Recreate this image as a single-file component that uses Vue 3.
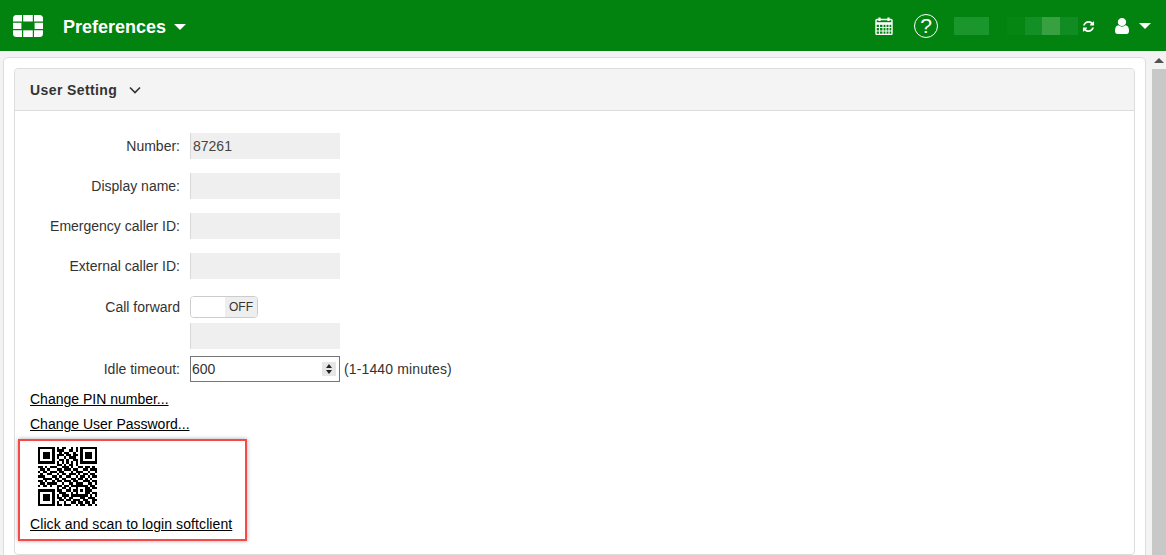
<script setup>
const qrRows = [
  '1111111010110010101111111',
  '1000001011100110101000001',
  '1011101001011001001011101',
  '1011101011101101101011101',
  '1011101010010111001011101',
  '1000001001101001101000001',
  '1111111010101010101111111',
  '0000000011010110100000000',
  '1101011100111010011011010',
  '0110100011011101100110111',
  '1011011101100010111001001',
  '0100110010110111010110110',
  '1110001101001100101101011',
  '0011110110110011011010100',
  '1101001011011101100111011',
  '0110111100100110111001101',
  '1011010011011011111110110',
  '0000000010110100100011011',
  '1111111011001101101011100',
  '1000001001110010100011011',
  '1011101010111011111110101',
  '1011101011010110001101110',
  '1011101001101101110110011',
  '1000001010010011011011010',
  '1111111011011100101101101'
]
const qrPath = qrRows
  .map((row, y) =>
    [...row].map((c, x) => (c === '1' ? `M${x} ${y}h1v1h-1z` : '')).join('')
  )
  .join('')

const fields = [
  { label: 'Number:', value: '87261' },
  { label: 'Display name:', value: '' },
  { label: 'Emergency caller ID:', value: '' },
  { label: 'External caller ID:', value: '' }
]

const refreshPath =
  'M1639 1056q0 5-1 7-64 268-268 434.5t-478 166.5q-146 0-282.5-55t-243.5-157l-129 129q-19 19-45 19t-45-19-19-45v-448q0-26 19-45t45-19h448q26 0 45 19t19 45-19 45l-137 137q71 66 161 102t187 36q134 0 250-65t186-179q11-17 53-117 8-23 30-23h192q13 0 22.5 9.5t9.5 22.5zm25-800v448q0 26-19 45t-45 19h-448q-26 0-45-19t-19-45 19-45l138-138q-148-137-349-137-134 0-250 65t-186 179q-11 17-53 117-8 23-30 23h-199q-13 0-22.5-9.5t-9.5-22.5v-7q65-268 270-434.5t480-166.5q146 0 284 55.5t245 156.5l130-129q19-19 45-19t45 19 19 45z'
const userPath =
  'M1536 1399q0 109-62.5 187t-150.5 78h-854q-88 0-150.5-78t-62.5-187q0-85 8.5-160.5t31.5-152 58.5-131 94-89 134.5-34.5q131 128 313 128t313-128q76 0 134.5 34.5t94 89 58.5 131 31.5 152 8.5 160.5zm-256-887q0 159-112.5 271.5t-271.5 112.5-271.5-112.5-112.5-271.5 112.5-271.5 271.5-112.5 271.5 112.5 112.5 271.5z'
</script>

<template>
  <div class="page">
    <header class="topbar">
      <svg class="logo" width="30" height="22" viewBox="0 0 30 22" fill="#fff">
        <path d="M0 6.5V3.5Q0 0 3.5 0H9V6.5Z" />
        <path d="M10.2 0H19.8V6.5H10.2Z" />
        <path d="M21 0H26.5Q30 0 30 3.5V6.5H21Z" />
        <path d="M0 7.8H8.4V14H0Z" />
        <path d="M21.6 7.8H30V14H21.6Z" />
        <path d="M0 15.3H9V22H3.5Q0 22 0 18.5Z" />
        <path d="M10.2 15.3H19.8V22H10.2Z" />
        <path d="M21 15.3H30V18.5Q30 22 26.5 22H21Z" />
      </svg>
      <span class="title">Preferences</span>
      <span class="caret title-caret"></span>
      <span class="spacer"></span>
      <svg class="cal" width="18" height="18" viewBox="0 0 18 18" fill="none" stroke="#fff">
        <rect x="1" y="2.5" width="16" height="15" rx="1" stroke-width="1.4" />
        <path d="M1 6.5H17" stroke-width="2.6" />
        <path d="M4.5 0.5V4M13.5 0.5V4" stroke-width="2.2" />
        <path d="M1 10.5H17M1 14H17M4.5 7V17M8 7V17M11 7V17M14 7V17" stroke-width="1.1" />
      </svg>
      <span class="help">?</span>
      <span class="blur blur-a"></span>
      <span class="blur-group">
        <span class="blur blur-b1"></span>
        <span class="blur blur-b2"></span>
        <span class="blur blur-b3"></span>
        <span class="blur blur-b4"></span>
      </span>
      <svg class="refresh" width="13" height="13" viewBox="0 0 1792 1792" fill="#fff">
        <path :d="refreshPath" />
      </svg>
      <svg class="user" width="14" height="16" viewBox="256 128 1280 1536" fill="#fff" preserveAspectRatio="none">
        <path :d="userPath" />
      </svg>
      <span class="caret user-caret"></span>
    </header>

    <div class="body">
      <main class="content">
        <section class="outer">
          <div class="panel">
            <div class="panel-head">
              <span class="panel-title">User Setting</span>
              <svg class="chev" width="12" height="8" viewBox="0 0 12 8" fill="none" stroke="#333" stroke-width="1.6">
                <path d="M1 1.5L6 6.5L11 1.5" />
              </svg>
            </div>
            <div class="panel-body">
              <div v-for="f in fields" :key="f.label" class="row">
                <label class="label">{{ f.label }}</label>
                <div class="input disabled">{{ f.value }}</div>
              </div>

              <div class="row forward">
                <label class="label">Call forward</label>
                <div class="toggle"><span class="toggle-on"></span><span class="toggle-off">OFF</span></div>
              </div>
              <div class="row forward-input">
                <span class="label"></span>
                <div class="input disabled"></div>
              </div>

              <div class="row idle">
                <label class="label">Idle timeout:</label>
                <div class="input number">
                  <span>600</span>
                  <span class="spin">
                    <i class="up"></i>
                    <i class="down"></i>
                  </span>
                </div>
                <span class="hint">(1-1440 minutes)</span>
              </div>

              <a class="link first-link">Change PIN number...</a>
              <a class="link second-link">Change User Password...</a>

              <div class="scan">
                <svg class="qr" width="59" height="59" viewBox="0 0 25 25" shape-rendering="crispEdges">
                  <path :d="qrPath" fill="#000" />
                </svg>
                <a class="link scan-link">Click and scan to login softclient</a>
              </div>
            </div>
          </div>
        </section>
      </main>
      <aside class="scrollbar">
        <div class="arrow"><i></i></div>
        <div class="thumb"></div>
      </aside>
    </div>
  </div>
</template>

<style>
html, body { margin: 0; overflow: hidden; }
</style>

<style scoped>
.page {
  width: 1166px;
  height: 555px;
  display: flex;
  flex-direction: column;
  overflow: hidden;
  font-family: "Liberation Sans", Arial, sans-serif;
  font-size: 14px;
  color: #333;
  background: #f3f3f3;
}
.topbar {
  height: 51px;
  flex: none;
  display: flex;
  align-items: center;
  background: #02830f;
  color: #fff;
  padding: 0 15px 0 13px;
  box-sizing: border-box;
}
.logo { flex: none; }
.title {
  margin-left: 20px;
  padding-top: 4px;
  font-size: 18px;
  font-weight: 700;
}
.caret {
  width: 0;
  height: 0;
  border-left: 6px solid transparent;
  border-right: 6px solid transparent;
  border-top: 6px solid #fff;
}
.title-caret { margin-left: 8px; margin-top: 2px; }
.spacer { flex: 1; }
.cal { flex: none; margin: 1px 21px 0 0; }
.help {
  width: 24px;
  height: 24px;
  flex: none;
  box-sizing: border-box;
  border: 1.5px solid #fff;
  border-radius: 50%;
  text-align: center;
  font-size: 21px;
  line-height: 21px;
  margin-right: 16px;
}
.blur { display: block; height: 18px; flex: none; }
.blur-a { width: 35px; background: #1b962c; margin: 1px 18px 0 0; }
.blur-group { display: flex; margin: 1px 4px 0 0; }
.blur-b1 { width: 18px; background: #058613; }
.blur-b2 { width: 17px; background: #148f25; }
.blur-b3 { width: 18px; background: #37a040; }
.blur-b4 { width: 18px; background: #118c22; }
.refresh { flex: none; margin: 1px 20px 0 0; }
.user { flex: none; margin: 1px 10px 0 0; }
.user-caret { margin-top: 1px; }

.body { flex: 1; display: flex; min-height: 0; }
.content { flex: 1; min-width: 0; padding: 6px 6px 0 3px; }
.outer {
  height: 520px;
  box-sizing: border-box;
  background: #fff;
  border: 1px solid #ddd;
  border-radius: 5px;
  padding: 10px;
}
.panel {
  height: 487px;
  box-sizing: border-box;
  border: 1px solid #ddd;
  border-radius: 4px;
  background: #fff;
  display: flex;
  flex-direction: column;
}
.panel-head {
  height: 41px;
  flex: none;
  display: flex;
  align-items: center;
  padding-left: 15px;
  background: #f4f4f4;
  border-bottom: 1px solid #ddd;
  border-radius: 4px 4px 0 0;
}
.panel-title { font-weight: 700; font-size: 14px; letter-spacing: 0.4px; color: #333; }
.chev { margin-left: 12px; }
.panel-body { padding: 22px 0 0 15px; flex: 1; }
.row {
  display: flex;
  align-items: center;
  margin-bottom: 14px;
}
.label {
  width: 150px;
  text-align: right;
  margin-right: 10px;
  color: #333;
  flex: none;
}
.input {
  width: 150px;
  height: 26px;
  box-sizing: border-box;
  line-height: 26px;
  padding-left: 2px;
  flex: none;
}
.disabled { background: #efefef; border-left: 1px solid #d8d8d8; color: #444; }
.forward { margin-top: 17px; margin-bottom: 5px; height: 22px; }
.toggle {
  width: 68px;
  height: 22px;
  box-sizing: border-box;
  border: 1px solid #ccc;
  border-radius: 4px;
  display: flex;
  overflow: hidden;
}
.toggle-on { width: 34px; background: #fff; }
.toggle-off {
  flex: 1;
  background: #eee;
  font-size: 12px;
  line-height: 20px;
  text-align: center;
  color: #333;
}
.forward-input { margin-bottom: 7px; }
.idle { margin-bottom: 0; }
.number {
  border: 1px solid #767676;
  display: flex;
  align-items: center;
  justify-content: space-between;
  line-height: 24px;
  padding: 0 3px 0 1px;
  color: #333;
}
.spin {
  width: 14px;
  height: 14px;
  background: #e6e6e6;
  display: flex;
  flex-direction: column;
  align-items: center;
  justify-content: center;
  gap: 2px;
}
.spin i { display: block; width: 0; height: 0; border-left: 3px solid transparent; border-right: 3px solid transparent; }
.spin .up { border-bottom: 4px solid #222; }
.spin .down { border-top: 4px solid #222; }
.hint { margin-left: 4px; color: #333; letter-spacing: 0.13px; }
.link {
  display: block;
  width: max-content;
  color: #000;
  text-decoration: underline;
  line-height: 16px;
}
.first-link { margin-top: 9px; }
.second-link { margin-top: 9px; }
.scan {
  margin: 7px 0 0 -12px;
  width: 229px;
  height: 102px;
  box-sizing: border-box;
  border: 2px solid #f44a4a;
  box-shadow: 0 0 4px rgba(0, 0, 0, 0.35);
  padding: 6px 0 0 10px;
}
.qr { display: block; margin-left: 8px; }
.scan-link { margin-top: 10px; letter-spacing: 0.09px; }

.scrollbar {
  width: 14px;
  flex: none;
  display: flex;
  flex-direction: column;
}
.arrow {
  height: 18px;
  flex: none;
  display: flex;
  align-items: center;
  justify-content: center;
}
.arrow i {
  display: block;
  width: 0;
  height: 0;
  border-left: 5px solid transparent;
  border-right: 5px solid transparent;
  border-bottom: 5px solid #505050;
}
.thumb { flex: 1; background: #c8c8c8; }
</style>
